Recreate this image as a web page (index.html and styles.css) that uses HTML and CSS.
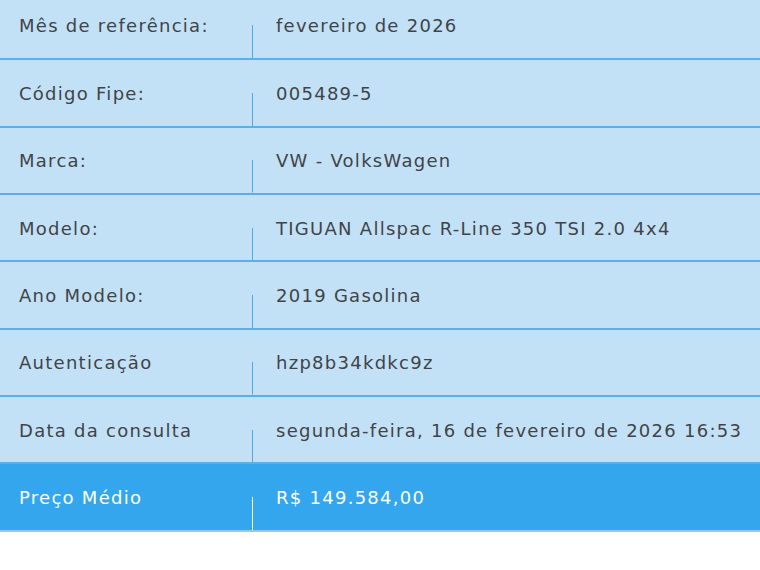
FILE: index.html
```html
<!DOCTYPE html>
<html lang="pt-BR">
<head>
<meta charset="utf-8">
<title>Consulta Fipe</title>
<link rel="stylesheet" href="styles.css">
</head>
<body>
<table class="fipe">
  <tbody>
    <tr><td class="label">Mês de referência:</td><td class="value">fevereiro de 2026</td></tr>
    <tr><td class="label">Código Fipe:</td><td class="value">005489-5</td></tr>
    <tr><td class="label">Marca:</td><td class="value">VW - VolksWagen</td></tr>
    <tr><td class="label">Modelo:</td><td class="value">TIGUAN Allspac R-Line 350 TSI 2.0 4x4</td></tr>
    <tr><td class="label">Ano Modelo:</td><td class="value">2019 Gasolina</td></tr>
    <tr><td class="label">Autenticação</td><td class="value">hzp8b34kdkc9z</td></tr>
    <tr><td class="label">Data da consulta</td><td class="value">segunda-feira, 16 de fevereiro de 2026 16:53</td></tr>
    <tr class="price"><td class="label">Preço Médio</td><td class="value">R$ 149.584,00</td></tr>
  </tbody>
</table>
</body>
</html>
```

FILE: styles.css
```css
html, body {
  margin: 0;
  padding: 0;
  background: #ffffff;
}

.fipe {
  width: 760px;
  margin-top: -8px;
  border-collapse: collapse;
  font-family: "DejaVu Sans", Verdana, sans-serif;
  font-size: 18px;
  letter-spacing: 1.27px;
  color: #404448;
  background: #c3e1f6;
}

.fipe tr {
  height: 67.33px;
  border-bottom: 2px solid #5caeea;
}

.fipe td {
  padding: 0;
  padding-top: 1px;
  vertical-align: middle;
  white-space: nowrap;
}

.fipe .label {
  width: 233px;
  padding-left: 19px;
}

.fipe .value {
  padding-left: 24px;
  background-image: linear-gradient(#4fa8e8, #4fa8e8);
  background-repeat: no-repeat;
  background-position: left bottom;
  background-size: 1px 50%;
}

.fipe .price {
  background: #33a6ee;
  color: #ffffff;
  border-bottom: 2px solid #8ccbf2;
}

.fipe .price .value {
  background-image: linear-gradient(#ffffff, #ffffff);
}
```
